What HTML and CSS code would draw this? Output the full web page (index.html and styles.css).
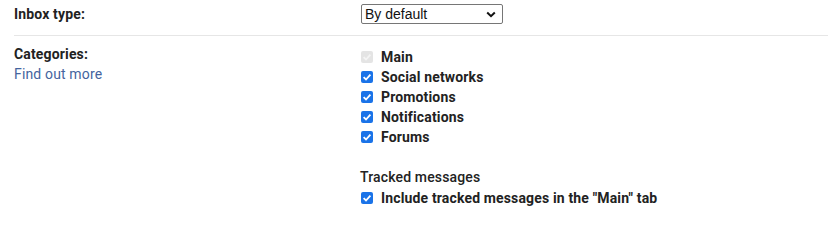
FILE: index.html
```html
<!DOCTYPE html>
<html>
<head>
<meta charset="utf-8">
<link rel="stylesheet" href="styles.css">
</head>
<body>
<div class="row row-first">
  <div class="label">Inbox type:</div>
  <div class="value">
    <div class="select">
      <span class="select-text">By default</span>
      <svg class="chev" width="10" height="7" viewBox="0 0 10 7"><path d="M1.2 1.5 L5 5.2 L8.8 1.5" fill="none" stroke="#111" stroke-width="2"/></svg>
    </div>
  </div>
</div>
<div class="row row-second">
  <div class="label">
    <div>Categories:</div>
    <a class="link">Find out more</a>
  </div>
  <div class="value value-list">
    <div class="check-row"><svg class="cb" width="12" height="12" viewBox="0 0 12 12"><rect x="0" y="0" width="12" height="12" rx="2" fill="#e4e4e4"/><path d="M2.6 6.2 L5 8.5 L9.4 3.6" fill="none" stroke="#f4f4f4" stroke-width="1.8"/></svg><span>Main</span></div>
    <div class="check-row"><svg class="cb" width="12" height="12" viewBox="0 0 12 12"><rect x="0" y="0" width="12" height="12" rx="2" fill="#1a73e8"/><path d="M2.6 6.2 L5 8.5 L9.4 3.6" fill="none" stroke="#fff" stroke-width="1.8"/></svg><span>Social networks</span></div>
    <div class="check-row"><svg class="cb" width="12" height="12" viewBox="0 0 12 12"><rect x="0" y="0" width="12" height="12" rx="2" fill="#1a73e8"/><path d="M2.6 6.2 L5 8.5 L9.4 3.6" fill="none" stroke="#fff" stroke-width="1.8"/></svg><span>Promotions</span></div>
    <div class="check-row"><svg class="cb" width="12" height="12" viewBox="0 0 12 12"><rect x="0" y="0" width="12" height="12" rx="2" fill="#1a73e8"/><path d="M2.6 6.2 L5 8.5 L9.4 3.6" fill="none" stroke="#fff" stroke-width="1.8"/></svg><span>Notifications</span></div>
    <div class="check-row"><svg class="cb" width="12" height="12" viewBox="0 0 12 12"><rect x="0" y="0" width="12" height="12" rx="2" fill="#1a73e8"/><path d="M2.6 6.2 L5 8.5 L9.4 3.6" fill="none" stroke="#fff" stroke-width="1.8"/></svg><span>Forums</span></div>
    <div class="subhead">Tracked messages</div>
    <div class="check-row include"><svg class="cb" width="12" height="12" viewBox="0 0 12 12"><rect x="0" y="0" width="12" height="12" rx="2" fill="#1a73e8"/><path d="M2.6 6.2 L5 8.5 L9.4 3.6" fill="none" stroke="#fff" stroke-width="1.8"/></svg><span>Include tracked messages in the "Main" tab</span></div>
  </div>
</div>
</body>
</html>
```
FILE: styles.css
```css
html, body {
  margin: 0;
  padding: 0;
  background: #ffffff;
}
body {
  font-family: Roboto, "Liberation Sans", Arial, sans-serif;
  font-size: 14px;
  line-height: 20px;
  color: #222222;
  letter-spacing: 0.15px;
}
.row {
  display: flex;
  margin-left: 14px;
}
.row-first {
  padding-top: 4px;
  padding-bottom: 11px;
  border-bottom: 1px solid #e6e6e6;
}
.row-second {
  padding-top: 8px;
}
.label {
  width: 346px;
  flex: none;
  font-weight: 700;
}
.link {
  display: block;
  font-weight: 400;
  color: #44649e;
  text-decoration: none;
}
.value {
  flex: 1;
}
.value-list {
  padding-top: 3px;
}
.select {
  height: 18px;
  margin-left: 1px;
  border: 1px solid #767676;
  border-radius: 2px;
  display: flex;
  align-items: center;
  justify-content: space-between;
  padding: 0 6px 0 3px;
  box-sizing: content-box;
  width: 131px;
}
.select-text {
  font-family: "Liberation Sans", Arial, sans-serif;
  font-size: 14px;
  font-weight: 400;
  color: #111111;
  line-height: 18px;
  letter-spacing: 0;
}
.chev {
  display: block;
}
.check-row {
  display: flex;
  align-items: center;
  font-weight: 700;
  height: 20px;
}
.cb {
  flex: none;
  margin-left: 1px;
  margin-right: 8px;
}
.subhead {
  margin-top: 20px;
  font-weight: 500;
  color: #222222;
}
.include {
  margin-top: 1px;
}
```
